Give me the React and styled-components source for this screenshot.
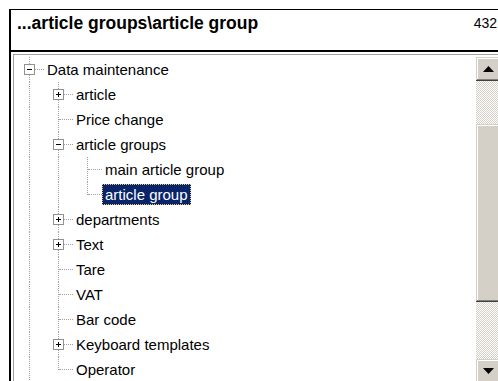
import styled, { createGlobalStyle, css } from 'styled-components'

const GlobalStyle = createGlobalStyle`
  html, body {
    margin: 0;
    background: #fff;
    overflow: hidden;
  }
  body {
    font-family: "Liberation Sans", Arial, sans-serif;
    color: #000;
  }
`;

const items = [
  { label: 'Data maintenance', level: 0, box: 'minus' },
  { label: 'article', level: 1, box: 'plus' },
  { label: 'Price change', level: 1 },
  { label: 'article groups', level: 1, box: 'minus' },
  { label: 'main article group', level: 2 },
  { label: 'article group', level: 2, last: true, selected: true },
  { label: 'departments', level: 1, box: 'plus' },
  { label: 'Text', level: 1, box: 'plus' },
  { label: 'Tare', level: 1 },
  { label: 'VAT', level: 1 },
  { label: 'Bar code', level: 1 },
  { label: 'Keyboard templates', level: 1, box: 'plus' },
  { label: 'Operator', level: 1, last: true },
]

function Expander({ type }) {
  return (
    <ExpanderIcon width="11" height="11" viewBox="0 0 11 11">
      <rect x="0.5" y="0.5" width="10" height="10" fill="#fff" stroke="#919191" />
      <rect x="3" y="5" width="5" height="1" fill="#000" />
      {type === 'plus' && <rect x="5" y="3" width="1" height="5" fill="#000" />}
    </ExpanderIcon>
  )
}

function Arrow({ down }) {
  return (
    <svg width="11" height="6" viewBox="0 0 11 6">
      {down
        ? <polygon points="0,0 11,0 5.5,6" fill="#000" />
        : <polygon points="5.5,0 11,6 0,6" fill="#000" />}
    </svg>
  )
}

export default function App() {
  return (
    <>
      <GlobalStyle />
      <Frame>
        <Header>
          <Title>...article groups\article group</Title>
          <Count>432</Count>
        </Header>
        <TreePanel>
          <TreeBox>
            <Tree>
              {items.map((item) => (
                <Row key={item.label}>
                  {Array.from({ length: item.level }).map((_, i) => (
                    <Cell key={i} $kind="pipe" />
                  ))}
                  <Cell $kind={item.last ? 'elbow' : 'tee'} $branch>
                    {item.box && <Expander type={item.box} />}
                  </Cell>
                  <Label $selected={item.selected}>{item.label}</Label>
                </Row>
              ))}
            </Tree>
            <ScrollBar>
              <ScrollButton><Arrow /></ScrollButton>
              <Track $h={43} />
              <Thumb />
              <Track $h={57} />
              <ScrollButton><Arrow down /></ScrollButton>
            </ScrollBar>
          </TreeBox>
        </TreePanel>
      </Frame>
    </>
  )
}

const Frame = styled.div`
  display: flex;
  flex-direction: column;
  width: 491px;
  height: 420px;
  padding: 9px 0 0 9px;
`;

const Header = styled.div`
  display: flex;
  align-items: flex-start;
  height: 40px;
  border-top: 1px solid #000;
  border-left: 2px solid #000;
  border-bottom: 2px solid #000;
  padding-left: 6px;
`;

const Title = styled.div`
  font-weight: bold;
  font-size: 17.5px;
  line-height: 20px;
  padding-top: 3px;
`;

const Count = styled.div`
  margin-left: auto;
  margin-right: 3px;
  font-size: 14px;
  line-height: 16px;
  margin-top: 5px;
`;

const TreePanel = styled.div`
  flex: 1;
  display: flex;
  border-left: 2px solid #000;
`;

const TreeBox = styled.div`
  flex: 1;
  display: flex;
  margin: 2px 0 0 2px;
  border-top: 1px solid #a0a0a0;
  border-left: 1px solid #a0a0a0;
`;

const Tree = styled.div`
  flex: 1;
  padding: 2px 0 0 1px;
`;

const Row = styled.div`
  display: flex;
  align-items: center;
  height: 25px;
`;

const Cell = styled.span`
  position: relative;
  flex-shrink: 0;
  width: 29px;
  height: 100%;

  &::before {
    content: '';
    position: absolute;
    left: 14px;
    top: 0;
    bottom: ${(p) => (p.$kind === 'elbow' ? '12px' : '0')};
    border-left: 1px dotted #a0a0a0;
  }

  ${(p) =>
    p.$branch &&
    css`
      &::after {
        content: '';
        position: absolute;
        left: 15px;
        right: 0;
        top: 12px;
        border-top: 1px dotted #a0a0a0;
      }
    `}
`;

const ExpanderIcon = styled.svg`
  position: absolute;
  left: 9px;
  top: 7px;
  z-index: 1;
  display: block;
`;

const Label = styled.span`
  font-size: 15px;
  line-height: 19px;
  padding: 0 2px;
  white-space: nowrap;
  border: 1px solid transparent;

  ${(p) =>
    p.$selected &&
    css`
      background: #0a246a;
      color: #fff;
      border: 1px dotted #e8c870;
    `}
`;

const ScrollBar = styled.div`
  display: flex;
  flex-direction: column;
  width: 24px;
  margin-top: 2px;
  flex-shrink: 0;
`;

const raised = css`
  background: #d4d0c8;
  box-shadow:
    inset -1px -1px #404040,
    inset 1px 1px #d4d0c8,
    inset -2px -2px #808080,
    inset 2px 2px #fff;
`;

const ScrollButton = styled.div`
  ${raised}
  height: 24px;
  display: flex;
  align-items: center;
  justify-content: center;
  flex-shrink: 0;
`;

const Track = styled.div`
  height: ${(p) => p.$h}px;
  flex-shrink: 0;
  background: repeating-conic-gradient(#d4d0c8 0 25%, #fff 0 50%) 0 0 / 2px 2px;
`;

const Thumb = styled.div`
  ${raised}
  height: 178px;
  flex-shrink: 0;
`;
